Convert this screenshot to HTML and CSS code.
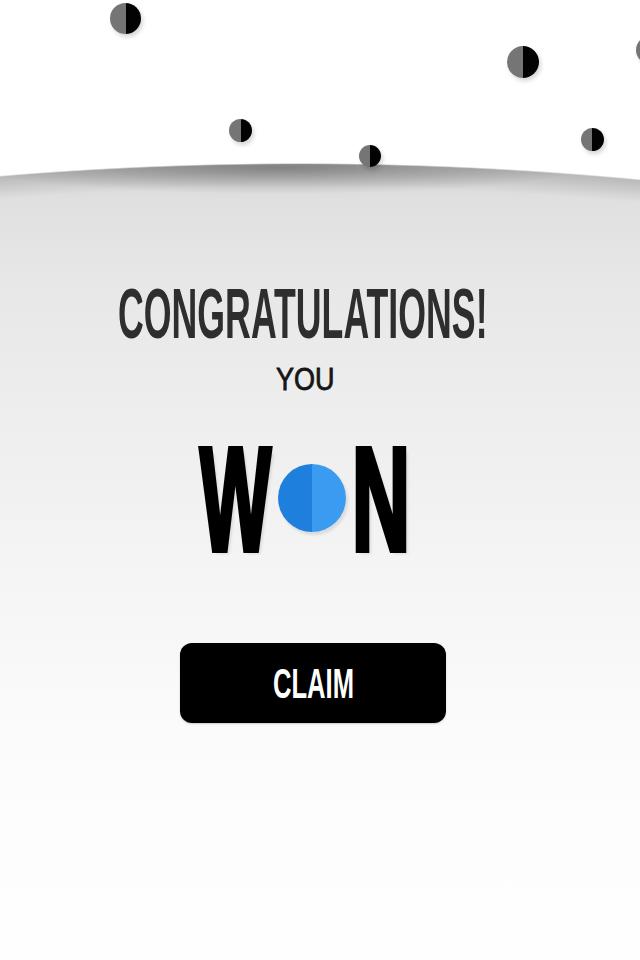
FILE: index.html
```html
<!DOCTYPE html>
<html lang="en">
<head>
<meta charset="utf-8">
<title>Congratulations</title>
<link rel="stylesheet" href="styles.css">
</head>
<body>
<div class="scene">
  <span class="ball b1"></span>
  <span class="ball b2"></span>
  <span class="ball b3"></span>
  <span class="ball b4"></span>
  <span class="ball b5"></span>
  <span class="ball b6"></span>
  <main class="content">
    <h1 class="congrats">CONGRATULATIONS!</h1>
    <p class="you">YOU</p>
    <div class="won">
      <span class="letter w">W</span>
      <span class="dot"></span>
      <span class="letter n">N</span>
    </div>
    <button class="claim" type="button"><span class="claim-label">CLAIM</span></button>
  </main>
</div>
</body>
</html>
```

FILE: styles.css
```css
html, body {
  margin: 0;
  padding: 0;
  background: #fff;
}

.scene {
  position: relative;
  width: 640px;
  height: 960px;
  overflow: hidden;
  font-family: "Liberation Sans", Arial, sans-serif;
  background:
    radial-gradient(1920px 1000px at 300px 1163px, rgba(255,255,255,0) 99.85%, #fff 100%),
    radial-gradient(1920px 1000px at 300px 1163px, rgba(0,0,0,0) 97.6%, rgba(0,0,0,0.14) 99.8%, rgba(0,0,0,0) 100%),
    radial-gradient(300px 26px at 280px 168px, rgba(0,0,0,0.3), rgba(0,0,0,0) 100%),
    linear-gradient(180deg, #d2d2d2 160px, #e0e0e0 200px, #e7e7e7 280px, #eeeeee 420px, #f4f4f4 560px, #fafafa 700px, #fdfdfd 820px, #fefefe 960px);
}

.ball {
  position: absolute;
  border-radius: 50%;
  background: linear-gradient(90deg, #757575 50%, #030303 50%);
  box-shadow: 2px 3px 4px rgba(0, 0, 0, 0.16);
}
.b1 { left: 110px; top: 3px; width: 31px; height: 31px; }
.b2 { left: 507px; top: 46px; width: 32px; height: 32px; }
.b3 { left: 581px; top: 128px; width: 23px; height: 23px; }
.b4 { left: 229px; top: 119px; width: 23px; height: 23px; }
.b5 { left: 359px; top: 145px; width: 22px; height: 22px; }
.b6 { left: 636px; top: 36px; width: 28px; height: 28px; }

.content {
  display: flex;
  flex-direction: column;
  align-items: center;
  padding: 279px 30px 0 0;
}

.congrats {
  margin: 0;
  width: 375px;
  font-size: 70px;
  line-height: 70px;
  font-weight: 700;
  color: #2e2e2e;
  white-space: nowrap;
  transform: scaleX(0.51);
  transform-origin: left center;
}

.you {
  margin: 15px 0 0;
  width: 58px;
  font-size: 31px;
  line-height: 31px;
  font-weight: 400;
  color: #161616;
  white-space: nowrap;
  -webkit-text-stroke: 0.8px #161616;
  transform: scaleX(0.87);
  transform-origin: left center;
}

.won {
  display: flex;
  align-items: center;
  height: 154px;
  margin-top: 28px;
}

.letter {
  display: block;
  font-size: 146px;
  line-height: 154px;
  font-weight: 700;
  color: #000;
  -webkit-text-stroke: 6px #000;
  white-space: nowrap;
  transform-origin: left center;
  text-shadow: 6px 4px 4px rgba(0, 0, 0, 0.1);
}
.w {
  width: 72px;
  transform: scaleX(0.515);
}
.n {
  width: 59px;
  transform: scaleX(0.55);
}

.dot {
  width: 68px;
  height: 68px;
  margin: 0 6px 5px 6px;
  border-radius: 50%;
  background: linear-gradient(90deg, #1f7fdc 50%, #3a9bf0 50%);
  box-shadow: 2px 3px 3px rgba(0, 0, 0, 0.1);
}

.claim {
  display: flex;
  align-items: center;
  justify-content: center;
  width: 266px;
  height: 80px;
  margin: 66px 0 0 16px;
  padding: 0;
  border: 0;
  border-radius: 12px;
  background: #000;
  box-shadow: 0 1px 2px rgba(0, 0, 0, 0.2);
  font-family: inherit;
}

.claim-label {
  display: block;
  width: 81px;
  font-size: 43px;
  line-height: 43px;
  font-weight: 700;
  color: #fff;
  white-space: nowrap;
  text-align: left;
  transform: scaleX(0.595);
  transform-origin: left center;
}
```
